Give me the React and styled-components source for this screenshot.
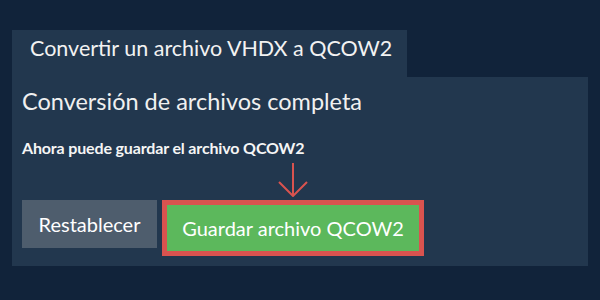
import React from "react";
import styled, { createGlobalStyle } from "styled-components";

const Global = createGlobalStyle`
  html, body { margin: 0; padding: 0; background: #11233a; }
  body { font-family: Lato, "Open Sans", sans-serif; width: 600px; height: 300px; overflow: hidden; }
`;

const Page = styled.div`
  padding: 30px 12px 0 12px;
  display: flex;
  flex-direction: column;
  align-items: flex-start;
`;

const Tab = styled.div`
  background: #22374e;
  color: #f2f2f2;
  font-size: 21.5px;
  line-height: 1.2;
  height: 47px;
  padding: 6px 0 0 18px;
  width: 395px;
  box-sizing: border-box;
  white-space: nowrap;
`;

const Panel = styled.div`
  background: #22374e;
  align-self: stretch;
  height: 189px;
  box-sizing: border-box;
  padding: 10px 12px 0 10px;
  display: flex;
  flex-direction: column;
`;

const Heading = styled.h2`
  margin: 0;
  font-weight: 400;
  font-size: 23.5px;
  color: #f0f0f0;
  line-height: 28px;
  white-space: nowrap;
`;

const Note = styled.p`
  margin: 23px 0 0;
  font-weight: 700;
  font-size: 16px;
  color: #f5f5f5;
  line-height: 1.2;
  letter-spacing: -0.15px;
  white-space: nowrap;
`;

const ArrowWrap = styled.div`
  height: 43px;
  box-sizing: border-box;
  padding: 0 0 3px 255px;
  display: flex;
  align-items: flex-end;
`;

const Actions = styled.div`
  display: flex;
  align-items: flex-start;
`;

const Button = styled.button`
  font-family: inherit;
  font-size: 20px;
  color: #fff;
  border: none;
  padding: 0;
  white-space: nowrap;
  cursor: pointer;
  display: flex;
  align-items: center;
  justify-content: center;
  background: ${(p) => (p.$primary ? "#5cb85c" : "#4e5d6d")};
  ${(p) =>
    p.$primary
      ? `
    outline: 5px solid #d9534f;
    margin: 5px 0 0 10px;
    width: 252px;
    height: 46px;
  `
      : `width: 135px; height: 48px;`}
`;

function Arrow() {
  return (
    <svg width="32" height="36" viewBox="0 0 32 36">
      <g stroke="#d9534f" strokeWidth="2" fill="none">
        <line x1="16" y1="2" x2="16" y2="34" />
        <polyline points="2,21 16,35 30,21" />
      </g>
    </svg>
  );
}

export default function App() {
  return (
    <>
      <Global />
      <Page>
        <Tab>Convertir un archivo VHDX a QCOW2</Tab>
        <Panel>
          <Heading>Conversión de archivos completa</Heading>
          <Note>Ahora puede guardar el archivo QCOW2</Note>
          <ArrowWrap>
            <Arrow />
          </ArrowWrap>
          <Actions>
            <Button>Restablecer</Button>
            <Button $primary>Guardar archivo QCOW2</Button>
          </Actions>
        </Panel>
      </Page>
    </>
  );
}
